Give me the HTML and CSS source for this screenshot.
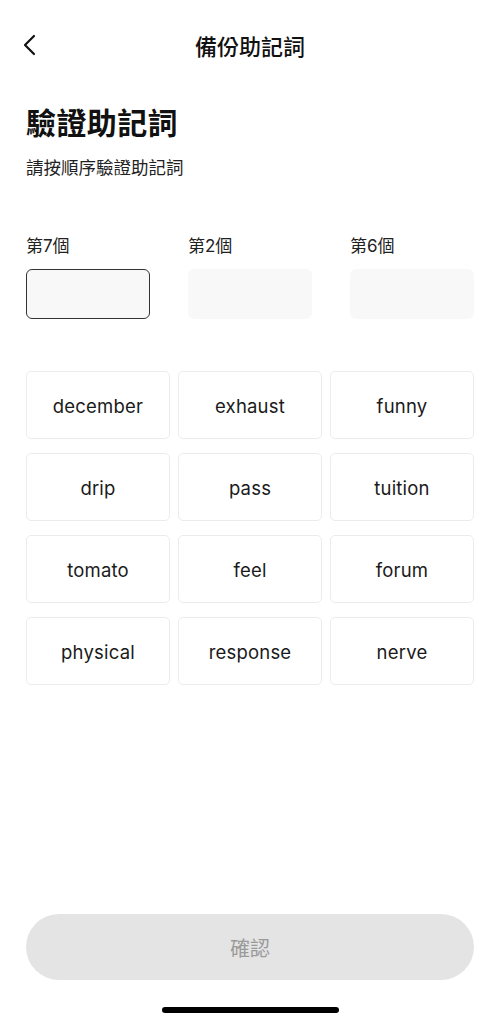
FILE: index.html
```html
<!DOCTYPE html>
<html lang="zh-Hant">
<head>
<meta charset="utf-8">
<title>備份助記詞</title>
<link rel="stylesheet" href="styles.css">
</head>
<body>
<div class="page">
  <header class="nav">
    <svg class="back" width="14" height="22" viewBox="0 0 14 22"><path d="M12 2 L3 11 L12 20" fill="none" stroke="#111" stroke-width="2.2" stroke-linecap="round" stroke-linejoin="round"/></svg>
    <div class="nav-title">備份助記詞</div>
  </header>
  <main class="content">
    <h1 class="heading">驗證助記詞</h1>
    <p class="sub">請按順序驗證助記詞</p>
    <div class="slots">
      <div class="slot">
        <div class="slot-label">第7個</div>
        <div class="slot-box active"></div>
      </div>
      <div class="slot">
        <div class="slot-label">第2個</div>
        <div class="slot-box"></div>
      </div>
      <div class="slot">
        <div class="slot-label">第6個</div>
        <div class="slot-box"></div>
      </div>
    </div>
    <div class="words">
      <div class="word">december</div>
      <div class="word">exhaust</div>
      <div class="word">funny</div>
      <div class="word">drip</div>
      <div class="word">pass</div>
      <div class="word">tuition</div>
      <div class="word">tomato</div>
      <div class="word">feel</div>
      <div class="word">forum</div>
      <div class="word">physical</div>
      <div class="word">response</div>
      <div class="word">nerve</div>
    </div>
  </main>
  <footer class="footer">
    <button class="confirm">確認</button>
    <div class="home-bar"></div>
  </footer>
</div>
</body>
</html>
```
FILE: styles.css
```css
* { box-sizing: border-box; }
html, body { margin: 0; padding: 0; background: #fff; }
body {
  font-family: Inter, "Noto Sans CJK TC", "Noto Sans", sans-serif;
  color: #111;
}
.page {
  height: 1023px;
  display: flex;
  flex-direction: column;
}
.nav {
  height: 90px;
  display: flex;
  align-items: center;
  justify-content: center;
  position: relative;
}
.back {
  position: absolute;
  left: 22px;
  top: 34px;
}
.nav-title {
  font-family: "Noto Sans CJK TC", sans-serif;
  font-size: 22px;
  font-weight: 500;
}
.content {
  padding: 0 26px;
}
.heading {
  margin: 13px 0 0;
  font-family: "Noto Sans CJK TC", sans-serif;
  font-size: 30px;
  line-height: 36px;
  font-weight: 700;
  letter-spacing: 0.4px;
}
.sub {
  margin: 16px 0 0;
  font-family: "Noto Sans CJK TC", sans-serif;
  font-size: 17.5px;
  line-height: 24px;
  color: #222;
}
.slots {
  margin-top: 56px;
  display: grid;
  grid-template-columns: repeat(3, 1fr);
  column-gap: 38px;
}
.slot-label {
  font-size: 17px;
  line-height: 22px;
  color: #222;
}
.slot-box {
  margin-top: 12px;
  height: 50px;
  background: #f8f8f8;
  border-radius: 6px;
}
.slot-box.active {
  border: 1.5px solid #333;
}
.words {
  margin-top: 52px;
  display: grid;
  grid-template-columns: repeat(3, 1fr);
  gap: 14px 8px;
}
.word {
  height: 68px;
  padding-top: 2px;
  border: 1px solid #ececec;
  border-radius: 5px;
  background: #fff;
  display: flex;
  align-items: center;
  justify-content: center;
  font-size: 18.5px;
  letter-spacing: 0.2px;
  color: #1a1a1a;
}
.footer {
  margin-top: auto;
  padding: 0 26px 10px;
  display: flex;
  flex-direction: column;
  align-items: center;
}
.confirm {
  width: 100%;
  height: 66px;
  border: none;
  border-radius: 33px;
  background: #e4e4e4;
  color: #9a9a9a;
  font-family: "Noto Sans CJK TC", sans-serif;
  font-size: 20px;
}
.home-bar {
  margin-top: 27px;
  width: 177px;
  height: 6px;
  border-radius: 3px;
  background: #000;
}
```
